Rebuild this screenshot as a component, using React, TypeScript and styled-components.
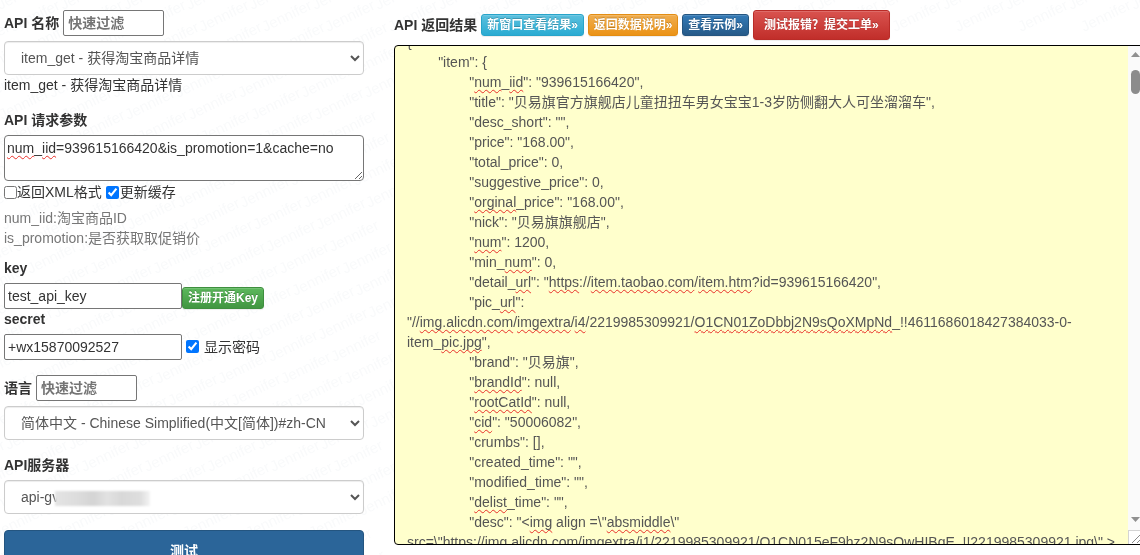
import React, { useLayoutEffect, useRef } from 'react';
import styled, { createGlobalStyle, css } from 'styled-components';

const FONT = '"Liberation Sans", Arial, "Noto Sans CJK SC", sans-serif';

const GlobalStyle = createGlobalStyle`
  html, body {
    margin: 0;
    height: 100%;
    overflow: hidden;
    background: #fff;
  }

  body {
    font-family: ${FONT};
    font-size: 14px;
    line-height: 20px;
    color: #333;
  }

  * {
    box-sizing: border-box;
  }
`;

const Watermark = styled.svg`
  position: fixed;
  top: 0;
  left: 0;
  z-index: 0;
  width: 1140px;
  height: 555px;
  font-family: ${FONT};
  font-size: 15px;
  fill: #f9fafb;
  pointer-events: none;
`;

const Page = styled.div`
  position: relative;
  z-index: 1;
  display: flex;
  gap: 30px;
  width: 1144px;
  padding: 10px 0 0 4px;
`;

const LeftColumn = styled.form`
  flex: 0 0 360px;
  width: 360px;
`;

const RightColumn = styled.section`
  flex: 0 0 750px;
  width: 750px;
`;

const Label = styled.div<{ $top?: number }>`
  font-weight: bold;
  margin-top: ${({ $top }) => $top ?? 0}px;
`;

const FilterRow = styled.div<{ $top?: number }>`
  display: flex;
  align-items: center;
  gap: 4px;
  margin-top: ${({ $top }) => $top ?? 0}px;
`;

const FilterInput = styled.input`
  width: 101px;
  height: 26px;
  padding: 1px 4px;
  border: 1px solid #767676;
  border-radius: 2px;
  background: #fff;
  font-family: ${FONT};
  font-size: 14px;
  font-weight: bold;

  &::placeholder {
    color: #757575;
    font-weight: bold;
    opacity: 1;
  }
`;

const SelectWrap = styled.div<{ $top?: number }>`
  position: relative;
  margin-top: ${({ $top }) => $top ?? 0}px;
`;

const Select = styled.select`
  display: block;
  width: 100%;
  height: 34px;
  padding: 6px 12px;
  border: 1px solid #ccc;
  border-radius: 4px;
  background-color: #fff;
  box-shadow: inset 0 1px 1px rgba(0, 0, 0, .075);
  font-family: ${FONT};
  font-size: 14px;
  line-height: 20px;
  color: #555;
`;

const Mosaic = styled.span`
  position: absolute;
  top: 11px;
  left: 51px;
  width: 95px;
  height: 15px;
  background:
    linear-gradient(90deg, #e4e4e4 0, #dcdcdc 25%, #d4d4d4 40%, #e2e2e2 55%, #d8d8d8 70%, #dedede 90%, #f4f4f4 100%);
  filter: blur(1px);
`;

const PlainLine = styled.div``;

const ParamsBox = styled.div`
  width: 360px;
  height: 46px;
  margin-top: 5px;
  padding: 4px 2px 2px;
  overflow: auto;
  resize: both;
  border: 1px solid #767676;
  border-radius: 4px;
  background: #fff;
  font-size: 14px;
  line-height: 17px;
  color: #333;
`;

const CheckRow = styled.label`
  display: flex;
  align-items: center;
  height: 20px;
  margin-top: 1px;

  input {
    width: 13px;
    height: 13px;
    margin: 0;
  }

  input + span + input {
    margin-left: 4px;
    margin-right: 1px;
  }
`;

const Help = styled.div`
  margin-top: 6px;
  color: #777;
`;

const InputRow = styled.div<{ $top?: number; $align?: string }>`
  display: flex;
  align-items: ${({ $align }) => $align ?? 'flex-end'};
  margin-top: ${({ $top }) => $top ?? 0}px;
`;

const TextInput = styled.input`
  width: 178px;
  height: 26px;
  padding: 1px 3px;
  border: 1px solid #767676;
  border-radius: 2px;
  background: #fff;
  font-family: ${FONT};
  font-size: 14px;
  color: #333;
`;

const ShowSecret = styled.label`
  display: flex;
  align-items: center;
  margin-left: 4px;
  margin-top: -1px;

  input {
    width: 13px;
    height: 13px;
    margin: 0 5px 0 0;
  }
`;

const tones = {
  info: ['#5bc0de', '#2aabd2', '#28a4c9'],
  warning: ['#f0ad4e', '#eb9316', '#e38d13'],
  primary: ['#337ab7', '#265a88', '#245580'],
  danger: ['#d9534f', '#c12e2a', '#b92c28'],
  success: ['#5cb85c', '#419641', '#3e8f3e'],
};

type Tone = keyof typeof tones;

const ThemeButton = styled.a<{ $tone: Tone; $large?: boolean; $side?: number }>`
  display: inline-block;
  flex: none;
  border-radius: 3px;
  font-size: 12px;
  font-weight: bold;
  line-height: 18px;
  white-space: nowrap;
  color: #fff;
  text-shadow: 0 -1px 0 rgba(0, 0, 0, .2);
  box-shadow: inset 0 1px 0 rgba(255, 255, 255, .15), 0 1px 1px rgba(0, 0, 0, .075);
  ${({ $tone }) => css`
    border: 1px solid ${tones[$tone][2]};
    background: linear-gradient(to bottom, ${tones[$tone][0]} 0, ${tones[$tone][1]} 100%);
  `}
  padding: ${({ $large, $side }) => ($large ? '5px 10px' : `1px ${$side ?? 5}px`)};
`;

const SubmitButton = styled.button`
  display: block;
  width: 360px;
  height: 42px;
  margin-top: 16px;
  padding: 0 0 3px;
  border: 1px solid #245580;
  border-radius: 4px;
  background: #2b6599;
  font-family: ${FONT};
  font-size: 14px;
  font-weight: bold;
  color: #fff;
`;

const ResultHeader = styled.div`
  display: flex;
  align-items: center;
  gap: 4px;
  height: 30px;
`;

const ResultTitle = styled.span`
  flex: 0 0 83px;
  font-weight: bold;
  white-space: nowrap;
`;

const ResultFrame = styled.div`
  position: relative;
  width: 750px;
  height: 500px;
  margin-top: 5px;
  overflow: hidden;
  border: 1px solid #000;
  border-radius: 4px;
  background: #ffc;
`;

const ResultBody = styled.div`
  height: 100%;
  padding: 0 27px 0 12px;
  overflow: hidden;
  color: #555;
  white-space: pre-wrap;
`;

const ScrollRail = styled.div`
  position: absolute;
  top: 0;
  right: 0;
  bottom: 0;
  display: flex;
  flex-direction: column;
  width: 15px;
  background: #fafafa;
`;

const ScrollArrow = styled.svg`
  display: block;
  flex: none;
  width: 15px;
  height: 24px;
  fill: #909090;
`;

const ScrollTrack = styled.div`
  flex: 1;
`;

const ScrollThumb = styled.div`
  width: 9px;
  height: 24px;
  margin-left: 3px;
  border-radius: 5px;
  background: #8c8c8c;
`;

const ResizeCorner = styled.svg`
  display: block;
  flex: none;
  width: 15px;
  height: 14px;
  border-top: 1px solid #d4d4d4;
  border-left: 1px solid #d4d4d4;
  background: #fff;
  stroke: #8a8a8a;
  stroke-width: 1;
`;

const Typo = styled.span`
  text-decoration: underline wavy #e8302a 1px;
  text-decoration-skip-ink: none;
  text-underline-offset: 2px;
`;

// ~word~ marks what the browser's spell checker underlines
const RESULT = [
  '{',
  '\t"item": {',
  '\t\t"~num~_~iid~": "939615166420",',
  '\t\t"title": "贝易旗官方旗舰店儿童扭扭车男女宝宝1-3岁防侧翻大人可坐溜溜车",',
  '\t\t"desc_short": "",',
  '\t\t"price": "168.00",',
  '\t\t"total_price": 0,',
  '\t\t"suggestive_price": 0,',
  '\t\t"~orginal~_price": "168.00",',
  '\t\t"nick": "贝易旗旗舰店",',
  '\t\t"~num~": 1200,',
  '\t\t"min_~num~": 0,',
  '\t\t"detail_~url~": "~https~://~item.taobao.com~/~item.htm~?id=939615166420",',
  '\t\t"pic_~url~": "//~img.alicdn.com~/~imgextra~/~i4~/2219985309921/~O1CN01ZoDbbj2N9sQoXMpNd~_!!4611686018427384033-0-item_~pic.jpg~",',
  '\t\t"brand": "贝易旗",',
  '\t\t"~brandId~": null,',
  '\t\t"~rootCatId~": null,',
  '\t\t"~cid~": "50006082",',
  '\t\t"crumbs": [],',
  '\t\t"created_time": "",',
  '\t\t"modified_time": "",',
  '\t\t"~delist~_time": "",',
  '\t\t"desc": "<~img~ align =\\"~absmiddle~\\" src=\\"https://img.alicdn.com/imgextra/i1/2219985309921/O1CN015eF9hz2N9sQwHIBgE_!!2219985309921.jpg\\" > <img align =\\"absmiddle\\"',
];

function withTypos (text: string): React.ReactNode[] {
  return text.split('~').map((part, index) => (index % 2 ? <Typo key={index}>{part}</Typo> : part));
}

function App (): React.ReactElement {
  const resultRef = useRef<HTMLDivElement>(null);

  useLayoutEffect(() => {
    if (resultRef.current) {
      resultRef.current.scrollTop = 14;
    }
  }, []);

  const marks: React.ReactElement[] = [];

  for (let row = 0; row < 27; row++) {
    for (let col = -6; col < 19; col++) {
      const x = col * 63 + row * 13;
      const y = row * 22 + 10;

      // the result panel is opaque, nothing shows behind it
      if (x > -50 && x < 1140 && (x < 375 || y < 45)) {
        marks.push(
          <text
            key={`${row}-${col}`}
            transform={`translate(${x} ${y}) rotate(-26)`}
          >
            Jennifer
          </text>
        );
      }
    }
  }

  return (
    <>
      <GlobalStyle />
      <Watermark aria-hidden='true'>{marks}</Watermark>
      <Page>
        <LeftColumn>
          <FilterRow>
            <Label>API 名称</Label>
            <FilterInput placeholder='快速过滤' />
          </FilterRow>
          <SelectWrap $top={5}>
            <Select defaultValue='item_get'>
              <option value='item_get'>item_get - 获得淘宝商品详情</option>
            </Select>
          </SelectWrap>
          <PlainLine>item_get - 获得淘宝商品详情</PlainLine>

          <Label $top={15}>API 请求参数</Label>
          <ParamsBox role='textbox'>
            {withTypos('~num~_~iid~=939615166420&is_promotion=1&cache=no')}
          </ParamsBox>
          <CheckRow>
            <input type='checkbox' />
            <span>返回XML格式</span>
            <input
              defaultChecked
              type='checkbox'
            />
            <span>更新缓存</span>
          </CheckRow>
          <Help>
            num_iid:淘宝商品ID
            <br />
            is_promotion:是否获取取促销价
          </Help>

          <Label $top={10}>key</Label>
          <InputRow $top={5}>
            <TextInput defaultValue='test_api_key' />
            <ThemeButton $tone='success'>注册开通Key</ThemeButton>
          </InputRow>
          <Label>secret</Label>
          <InputRow
            $align='center'
            $top={5}
          >
            <TextInput defaultValue='+wx15870092527' />
            <ShowSecret>
              <input
                defaultChecked
                type='checkbox'
              />
              显示密码
            </ShowSecret>
          </InputRow>

          <FilterRow $top={15}>
            <Label>语言</Label>
            <FilterInput placeholder='快速过滤' />
          </FilterRow>
          <SelectWrap $top={5}>
            <Select defaultValue='zh-CN'>
              <option value='zh-CN'>简体中文 - Chinese Simplified(中文[简体])#zh-CN</option>
            </Select>
          </SelectWrap>

          <Label $top={15}>API服务器</Label>
          <SelectWrap $top={5}>
            <Select defaultValue='gw'>
              <option value='gw'>api-gv</option>
            </Select>
            <Mosaic />
          </SelectWrap>

          <SubmitButton type='button'>测试</SubmitButton>
        </LeftColumn>

        <RightColumn>
          <ResultHeader>
            <ResultTitle>API 返回结果</ResultTitle>
            <ThemeButton $tone='info'>新窗口查看结果»</ThemeButton>
            <ThemeButton
              $side={4.8}
              $tone='warning'
            >
              返回数据说明»
            </ThemeButton>
            <ThemeButton $tone='primary'>查看示例»</ThemeButton>
            <ThemeButton
              $large
              $tone='danger'
            >
              测试报错？提交工单»
            </ThemeButton>
          </ResultHeader>
          <ResultFrame>
            <ResultBody ref={resultRef}>
              {RESULT.map((line, index) => (
                <div key={index}>{withTypos(line)}</div>
              ))}
            </ResultBody>
            <ScrollRail aria-hidden='true'>
              <ScrollArrow viewBox='0 0 15 24'>
                <path d='M7.5 6L12 11H3z' />
              </ScrollArrow>
              <ScrollTrack>
                <ScrollThumb />
              </ScrollTrack>
              <ScrollArrow viewBox='0 0 15 24'>
                <path d='M7.5 16L12 11H3z' />
              </ScrollArrow>
              <ResizeCorner viewBox='0 0 14 13'>
                <path d='M3 12L13 2M8 12L13 7' />
              </ResizeCorner>
            </ScrollRail>
          </ResultFrame>
        </RightColumn>
      </Page>
    </>
  );
}

export default App;
